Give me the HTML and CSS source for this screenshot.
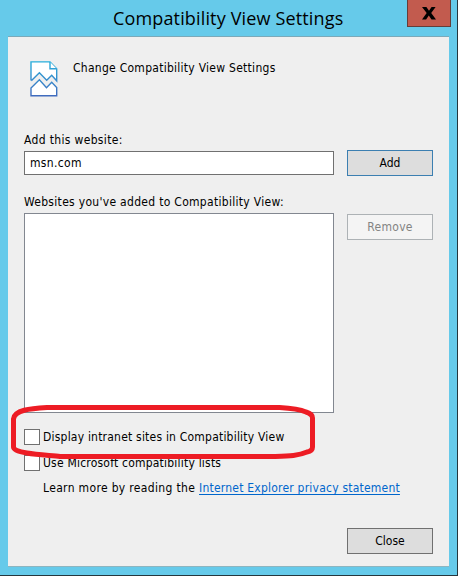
FILE: index.html
```html
<!DOCTYPE html>
<html lang="en">
<head>
<meta charset="utf-8">
<title>Compatibility View Settings</title>
<link rel="stylesheet" href="styles.css">
</head>
<body>
<div class="window">
  <header class="titlebar">
    <h1 class="title">Compatibility View Settings</h1>
    <button class="window-close" aria-label="Close window">
      <svg width="14" height="13" viewBox="0 0 14 13"><path d="M0 0H4.4L7 3.7 9.6 0H13.6L9.2 6 14 12.500H9.500L6.800 8.600 4.100 12.500H0L4.700 6Z" fill="#000"/></svg>
    </button>
  </header>
  <main class="client">
    <div class="intro">
      <svg class="page-icon" width="28" height="36" viewBox="0 0 28 36">
        <defs><linearGradient id="ink" gradientUnits="userSpaceOnUse" x1="0" y1="0" x2="0" y2="36"><stop offset="0" stop-color="#29b0dc"/><stop offset="1" stop-color="#4169bd"/></linearGradient></defs>
        <g fill="#fff" stroke="url(#ink)" stroke-width="1.4">
          <path d="M1 19.500V.9H20L26.700 7.700V19.800L21.700 14.200 16.700 19.200 9.400 11.700 1.300 19.800"/>
          <path d="M20 .9V7.700H26.700"/>
          <path d="M1 34.700V27L9.400 18.700 16.500 26.700 21.700 21.200 26.700 26.500V34.700Z"/>
        </g>
      </svg>
      <p class="t-intro">Change Compatibility View Settings</p>
    </div>
    <label class="field-label t-add" for="site">Add this website:</label>
    <div class="row add-row">
      <input id="site" class="field" type="text" value="msn.com">
      <button class="button default">Add</button>
    </div>
    <p class="field-label list-label">Websites you've added to Compatibility View:</p>
    <div class="row list-row">
      <div class="listbox"></div>
      <button class="button remove" disabled>Remove</button>
    </div>
    <div class="option first"><span class="checkbox"></span><span>Display intranet sites in Compatibility View</span></div>
    <div class="option"><span class="checkbox"></span><span>Use Microsoft compatibility lists</span></div>
    <p class="learn"><span class="t-learn">Learn more by reading the </span><a href="#">Internet Explorer privacy statement</a></p>
    <footer class="footer"><button class="button">Close</button></footer>
  </main>
  <svg class="marker" width="308" height="62" viewBox="0 0 308 62">
    <path d="M39 7.500H271C280 8 290 8.500 298 12Q304.500 14 304.500 18V47Q304.500 51 299 52C290 56 280 56 264 56.500H52C45 55.500 30 55 19 53Q5.500 51 5.500 47V19C6.500 10 22 8.500 39 7.500Z" fill="none" stroke="#ed1c24" stroke-width="5" stroke-linejoin="round"/>
  </svg>
</div>
</body>
</html>
```
FILE: styles.css
```css
* { box-sizing: border-box; }
body { margin: 0; overflow: hidden; font: 12px/16px "DejaVu Sans Condensed", "DejaVu Sans", sans-serif; font-stretch: condensed; color: #000; }
p, h1 { margin: 0; }
button { font: inherit; color: inherit; padding: 0; }
span, a { white-space: pre; }
.window { position: relative; width: 458px; height: 576px; padding: 0 8px 8px; background: #66caea; border-right: 1px solid #25363d; border-bottom: 1px solid #25363d; display: flex; flex-direction: column; }
.titlebar { height: 36px; flex: none; display: flex; justify-content: flex-end; }
.title { width: 294px; font: 400 18px/37px "Open Sans", "Noto Sans", sans-serif; letter-spacing: .15px; white-space: nowrap; }
.window-close { width: 44px; height: 27px; margin-right: -2px; display: flex; align-items: center; justify-content: center; background: #c25b4e; border: 1px solid #653d39; border-top: 0; }
.client { flex: 1; background: #efefef; border-top: 1px solid #7ba9b9; border-bottom: 1px solid #8db5c0; padding: 23px 16px 0; }
.intro { display: flex; gap: 15px; height: 71px; padding-left: 6px; }
.page-icon { margin-top: 1px; }
.t-intro { letter-spacing: .27px; }
.field-label { display: block; height: 16px; margin-top: 1px; }
.t-add { letter-spacing: .34px; }
.row { display: flex; justify-content: space-between; align-items: flex-start; }
.add-row { margin-top: 2px; }
.field { width: 310px; height: 24px; margin-top: 1px; padding: 0 5px; border: 1px solid #707070; background: #fff; font: inherit; color: inherit; outline: none; letter-spacing: .35px; }
.button { width: 86px; height: 26px; border: 1px solid #707070; background: #ddd; }
.default { border-color: #3c7fb1; }
.list-label { margin-top: 18px; letter-spacing: .3px; }
.list-row { margin-top: 3px; }
.listbox { width: 310px; height: 200px; border: 1px solid #828790; background: #fff; }
.remove { margin-top: 1px; border-color: #adb2b5; background: #f4f4f4; color: #838383; letter-spacing: .3px; }
.option { display: flex; align-items: center; gap: 3px; height: 16px; margin-top: 10px; letter-spacing: .21px; }
.option.first { margin-top: 16px; }
.checkbox { width: 16px; height: 16px; border: 1px solid #707070; background: #fff; }
.learn { margin: 9px 0 0 19px; white-space: nowrap; letter-spacing: .22px; }
.t-learn { letter-spacing: .34px; }
.learn a { color: #0066cc; text-decoration: underline; text-underline-offset: 2px; }
.footer { display: flex; justify-content: flex-end; margin-top: 32px; }
.marker { position: absolute; left: 8px; top: 400px; }
```
